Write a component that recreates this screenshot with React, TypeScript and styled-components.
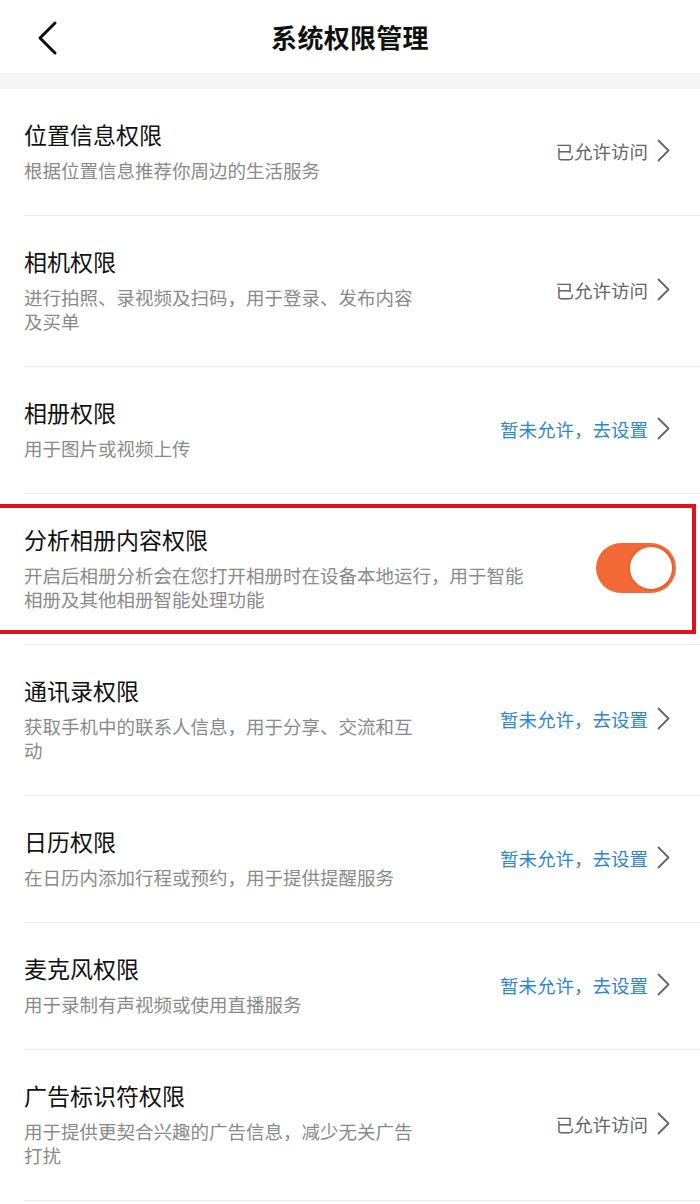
import React from "react";
import styled, { createGlobalStyle } from "styled-components";

const GlobalStyle = createGlobalStyle`
  html, body {
    margin: 0;
    padding: 0;
    background: #ffffff;
    font-family: "Noto Sans CJK SC", "Noto Sans", sans-serif;
  }
`;

const Page = styled.div`
  width: 700px;
  min-height: 1204px;
  background: #ffffff;
  overflow: hidden;
`;

const Header = styled.header`
  position: relative;
  height: 73px;
  display: flex;
  align-items: center;
  justify-content: center;
`;

const BackButton = styled.button`
  position: absolute;
  left: 30px;
  top: 18px;
  width: 34px;
  height: 40px;
  padding: 0;
  border: none;
  background: none;
  display: flex;
  align-items: center;
  justify-content: center;
`;

const Title = styled.h1`
  margin: 0;
  font-size: 26px;
  font-weight: 700;
  color: #111111;
  letter-spacing: 0.3px;
`;

const Band = styled.div`
  height: 16px;
  background: #f5f5f5;
`;

const List = styled.ul`
  list-style: none;
  margin: 0;
  padding: 0;
`;

const Row = styled.li`
  position: relative;
  margin-left: 24px;
  padding: 30px 30px 33px 0;
  display: flex;
  align-items: center;
  border-bottom: 1px solid #ededed;
`;

const Texts = styled.div`
  flex: 1;
  display: flex;
  flex-direction: column;
  gap: 9px;
`;

const ItemTitle = styled.div`
  font-size: 23px;
  line-height: 30px;
  color: #111111;
`;

const ItemDesc = styled.div`
  font-size: 18.5px;
  line-height: 24px;
  color: #8a8a8a;
  max-width: 400px;
`;

const WideDesc = styled(ItemDesc)`
  max-width: 508px;
`;

const Status = styled.div<{ $blue?: boolean }>`
  display: flex;
  align-items: center;
  gap: 9px;
  font-size: 18.5px;
  color: ${(p) => (p.$blue ? "#2d86d2" : "#666666")};
  white-space: nowrap;
`;

const Switch = styled.div`
  position: relative;
  width: 80px;
  height: 50px;
  margin-right: -6px;
  border-radius: 25px;
  background: #f36a36;
  box-sizing: border-box;
`;

const Knob = styled.div`
  position: absolute;
  right: 2px;
  top: 2px;
  width: 46px;
  height: 46px;
  border-radius: 50%;
  background: #ffffff;
  border: 2px solid #e8642f;
  box-sizing: border-box;
`;

const Highlight = styled.div`
  position: absolute;
  left: -28px;
  right: 4px;
  top: 10px;
  bottom: 10px;
  border: 4px solid #e4101f;
  pointer-events: none;
`;

const Chevron = () => (
  <svg width="13" height="23" viewBox="0 0 13 23" fill="none">
    <path d="M1.5 1.5 L11.5 11.5 L1.5 21.5" stroke="#666" strokeWidth="1.8" strokeLinecap="round" strokeLinejoin="round" />
  </svg>
);

type Item = {
  title: string;
  desc: string;
  granted: boolean;
};

const items: Item[] = [
  { title: "位置信息权限", desc: "根据位置信息推荐你周边的生活服务", granted: true },
  { title: "相机权限", desc: "进行拍照、录视频及扫码，用于登录、发布内容及买单", granted: true },
  { title: "相册权限", desc: "用于图片或视频上传", granted: false },
];

const itemsAfter: Item[] = [
  { title: "通讯录权限", desc: "获取手机中的联系人信息，用于分享、交流和互动", granted: false },
  { title: "日历权限", desc: "在日历内添加行程或预约，用于提供提醒服务", granted: false },
  { title: "麦克风权限", desc: "用于录制有声视频或使用直播服务", granted: false },
  { title: "广告标识符权限", desc: "用于提供更契合兴趣的广告信息，减少无关广告打扰", granted: true },
];

const PermissionRow: React.FC<{ item: Item }> = ({ item }) => (
  <Row>
    <Texts>
      <ItemTitle>{item.title}</ItemTitle>
      <ItemDesc>{item.desc}</ItemDesc>
    </Texts>
    {item.granted ? (
      <Status>
        已允许访问
        <Chevron />
      </Status>
    ) : (
      <Status $blue>
        暂未允许，去设置
        <Chevron />
      </Status>
    )}
  </Row>
);

const App: React.FC = () => {
  return (
    <Page>
      <GlobalStyle />
      <Header>
        <BackButton aria-label="返回">
          <svg width="24" height="36" viewBox="0 0 24 36" fill="none">
            <path d="M20 3 L5 18 L20 33" stroke="#111" strokeWidth="3" strokeLinecap="round" strokeLinejoin="round" />
          </svg>
        </BackButton>
        <Title>系统权限管理</Title>
      </Header>
      <Band />
      <List>
        {items.map((item) => (
          <PermissionRow key={item.title} item={item} />
        ))}
        <Row>
          <Highlight />
          <Texts>
            <ItemTitle>分析相册内容权限</ItemTitle>
            <WideDesc>开启后相册分析会在您打开相册时在设备本地运行，用于智能相册及其他相册智能处理功能</WideDesc>
          </Texts>
          <Switch>
            <Knob />
          </Switch>
        </Row>
        {itemsAfter.map((item) => (
          <PermissionRow key={item.title} item={item} />
        ))}
      </List>
    </Page>
  );
};

export default App;
